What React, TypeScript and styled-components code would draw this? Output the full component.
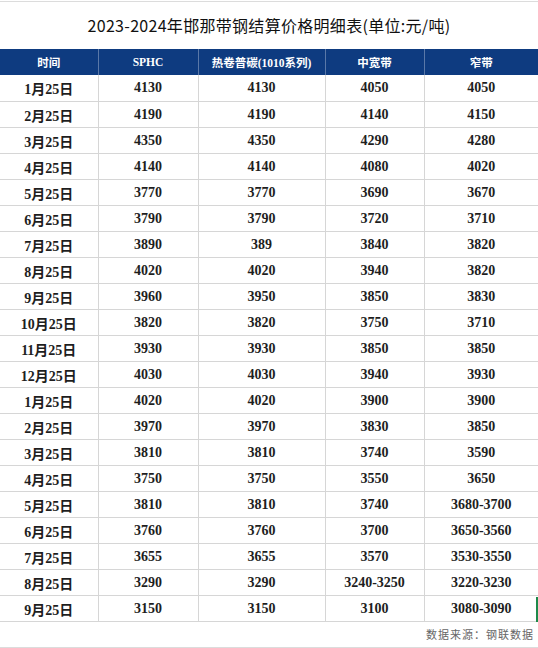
import * as React from "react";
import styled, { createGlobalStyle } from "styled-components";

const GlobalStyle = createGlobalStyle`
  html, body {
    margin: 0;
    padding: 0;
    background: #ffffff;
  }
  body {
    font-family: "Liberation Serif", "Noto Sans CJK SC", serif;
  }
`;

const Page = styled.div`
  width: 538px;
  height: 648px;
  display: flex;
  flex-direction: column;
  background: #fff;
  overflow: hidden;
`;

const TopRule = styled.div`
  height: 2px;
  border-bottom: 1px solid #dcdcdc;
  box-sizing: border-box;
`;

const Title = styled.div`
  height: 47px;
  display: flex;
  align-items: center;
  justify-content: center;
  font-family: "Noto Sans CJK SC", "Noto Sans", sans-serif;
  font-size: 16px;
  color: #111;
  letter-spacing: 0.3px;
  padding-bottom: 2px;
  box-sizing: border-box;
`;

const Table = styled.table`
  width: 538px;
  border-collapse: collapse;
  table-layout: fixed;
`;

const HeadCell = styled.th`
  height: 26px;
  padding: 0;
  background: #0e3b80;
  color: #fff;
  font-family: "Liberation Serif", "Noto Sans CJK SC", serif;
  font-size: 11.5px;
  font-weight: 700;
  text-align: center;
  border-left: 1px solid #5a78a8;
  box-sizing: border-box;
  &:first-child {
    border-left: none;
  }
`;

const Row = styled.tr``;

const Cell = styled.td`
  height: 26px;
  padding: 1px 0 0;
  text-align: center;
  font-family: "Liberation Serif", "Times New Roman", "Noto Sans CJK SC", serif;
  font-size: 14px;
  font-weight: 700;
  color: #1e1e1e;
  border: 1px solid #d6d6d6;
  border-top: none;
  box-sizing: border-box;
  position: relative;
  &:first-child {
    border-left: none;
  }
  &:last-child {
    border-right: none;
  }
`;

const Selection = styled.span`
  position: absolute;
  right: 0;
  top: 1px;
  bottom: -1px;
  width: 2px;
  background: #1d8a4a;
`;

const Footer = styled.div`
  height: 26px;
  display: flex;
  align-items: center;
  justify-content: flex-end;
  padding-right: 4px;
  font-family: "Noto Sans CJK SC", sans-serif;
  font-size: 11px;
  color: #666;
  letter-spacing: 1px;
  border-bottom: 1px solid #dcdcdc;
  box-sizing: border-box;
`;

const columns = ["时间", "SPHC", "热卷普碳(1010系列)", "中宽带", "窄带"];
const widths = [98, 100, 127, 99, 114];

const rows: string[][] = [
  ["1月25日", "4130", "4130", "4050", "4050"],
  ["2月25日", "4190", "4190", "4140", "4150"],
  ["3月25日", "4350", "4350", "4290", "4280"],
  ["4月25日", "4140", "4140", "4080", "4020"],
  ["5月25日", "3770", "3770", "3690", "3670"],
  ["6月25日", "3790", "3790", "3720", "3710"],
  ["7月25日", "3890", "389", "3840", "3820"],
  ["8月25日", "4020", "4020", "3940", "3820"],
  ["9月25日", "3960", "3950", "3850", "3830"],
  ["10月25日", "3820", "3820", "3750", "3710"],
  ["11月25日", "3930", "3930", "3850", "3850"],
  ["12月25日", "4030", "4030", "3940", "3930"],
  ["1月25日", "4020", "4020", "3900", "3900"],
  ["2月25日", "3970", "3970", "3830", "3850"],
  ["3月25日", "3810", "3810", "3740", "3590"],
  ["4月25日", "3750", "3750", "3550", "3650"],
  ["5月25日", "3810", "3810", "3740", "3680-3700"],
  ["6月25日", "3760", "3760", "3700", "3650-3560"],
  ["7月25日", "3655", "3655", "3570", "3530-3550"],
  ["8月25日", "3290", "3290", "3240-3250", "3220-3230"],
  ["9月25日", "3150", "3150", "3100", "3080-3090"],
];

export default function App() {
  return (
    <>
      <GlobalStyle />
      <Page>
        <TopRule />
        <Title>2023-2024年邯那带钢结算价格明细表(单位:元/吨)</Title>
        <Table>
          <colgroup>
            {widths.map((w, i) => (
              <col key={i} style={{ width: w }} />
            ))}
          </colgroup>
          <thead>
            <tr>
              {columns.map((c) => (
                <HeadCell key={c}>{c}</HeadCell>
              ))}
            </tr>
          </thead>
          <tbody>
            {rows.map((r, i) => (
              <Row key={i}>
                {r.map((v, j) => (
                  <Cell key={j}>
                    {v}
                    {i === rows.length - 1 && j === r.length - 1 && <Selection />}
                  </Cell>
                ))}
              </Row>
            ))}
          </tbody>
        </Table>
        <Footer>数据来源：钢联数据</Footer>
      </Page>
    </>
  );
}
